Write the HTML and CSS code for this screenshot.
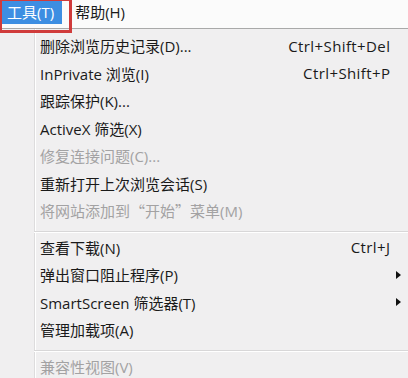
FILE: index.html
```html
<!DOCTYPE html>
<html lang="zh-CN">
<head>
    <meta charset="UTF-8">
    <title>工具菜单</title>
    <link rel="stylesheet" href="styles.css">
</head>
<body>
    <div class="menubar">
        <div class="menu-title active">工具(T)</div>
        <div class="menu-title">帮助(H)</div>
        <div class="highlight-box"></div>
    </div>

    <div class="dropdown">
        <div class="gutter"></div>
        <div class="items">
            <div class="item"><span>删除浏览历史记录(D)...</span><span class="key">Ctrl+Shift+Del</span></div>
            <div class="item"><span>InPrivate 浏览(I)</span><span class="key">Ctrl+Shift+P</span></div>
            <div class="item"><span>跟踪保护(K)...</span></div>
            <div class="item"><span>ActiveX 筛选(X)</span></div>
            <div class="item disabled"><span>修复连接问题(C)...</span></div>
            <div class="item"><span>重新打开上次浏览会话(S)</span></div>
            <div class="item disabled"><span>将网站添加到<span class="cjk">“开始”</span>菜单(M)</span></div>
            <div class="separator"></div>
            <div class="item"><span>查看下载(N)</span><span class="key">Ctrl+J</span></div>
            <div class="item"><span>弹出窗口阻止程序(P)</span><span class="arrow"></span></div>
            <div class="item"><span>SmartScreen 筛选器(T)</span><span class="arrow"></span></div>
            <div class="item"><span>管理加载项(A)</span></div>
            <div class="separator"></div>
            <div class="item disabled"><span>兼容性视图(V)</span></div>
        </div>
    </div>
</body>
</html>
```

FILE: styles.css
```css
body {
    margin: 0;
    width: 408px;
    height: 378px;
    overflow: hidden;
    font-family: "Open Sans", "Noto Sans CJK SC", sans-serif;
    font-size: 15px;
    color: #1a1a1a;
    background-color: #f0eff0;
}

.cjk {
    font-family: "Noto Sans CJK SC", sans-serif;
}

.menubar {
    position: relative;
    display: flex;
    align-items: flex-start;
    height: 28px;
    background-color: #fbfbfb;
    border-bottom: 1px solid #a9a9a9;
}

.menu-title {
    height: 23px;
    line-height: 23px;
    padding: 0 6px;
    margin-top: 1px;
}

.menu-title.active {
    margin-left: 2px;
    padding: 0 8px 0 5px;
    background-color: #3d8ee2;
    color: #fff;
}

.menu-title + .menu-title {
    margin-left: 7px;
}

.highlight-box {
    position: absolute;
    left: 0;
    top: 0;
    width: 67px;
    height: 29px;
    border: 3px solid #d03b3b;
    border-top-width: 1px;
    border-left-width: 2px;
}

.dropdown {
    display: flex;
    height: 349px;
}

.gutter {
    width: 34px;
    border-right: 1px solid #dddcdd;
    box-shadow: 1px 0 0 #fff;
}

.items {
    flex: 1;
    padding-top: 3px;
    padding-left: 5px;
}

.item {
    display: flex;
    align-items: center;
    justify-content: space-between;
    height: 27.5px;
    padding-right: 18px;
    white-space: nowrap;
}

.item.disabled {
    color: #a3a2a3;
}

.key {
    letter-spacing: 0.4px;
    margin-right: -0.4px;
}

.arrow {
    width: 0;
    height: 0;
    margin-right: -11px;
    border-top: 4px solid transparent;
    border-bottom: 4px solid transparent;
    border-left: 5px solid #111;
}

.separator {
    height: 2px;
    margin: 6px 0 1px -6px;
    border-top: 1px solid #d8d7d8;
    border-bottom: 1px solid #fff;
    box-sizing: border-box;
}
```
